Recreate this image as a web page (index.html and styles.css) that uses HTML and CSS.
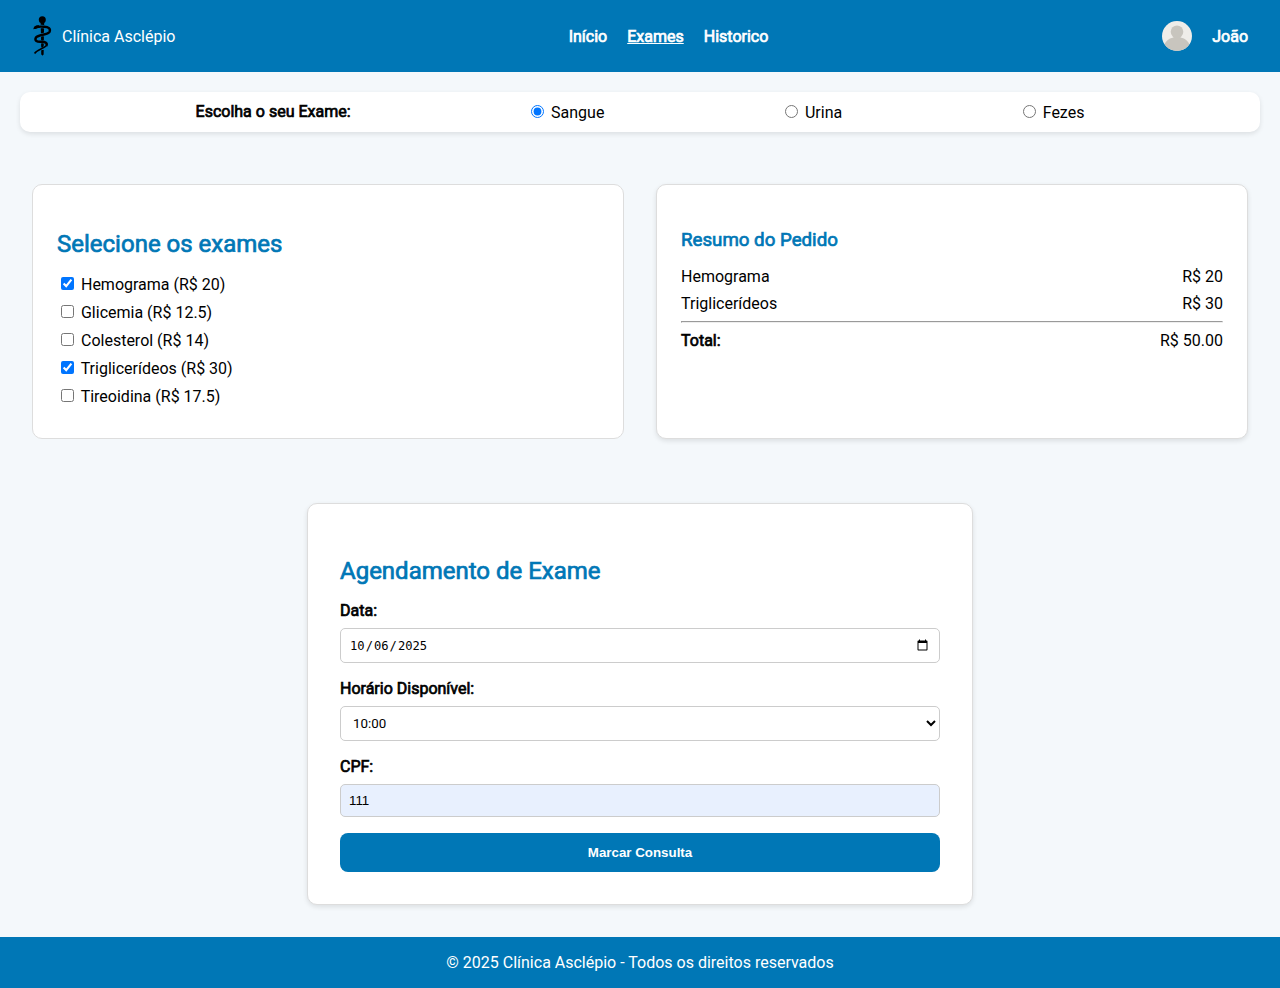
FILE: index.html
```html
<!DOCTYPE html>
<html lang="en">
<head>
<meta charset="utf-8">
<title>Clínica Asclépio</title>
<link rel="stylesheet" href="styles.css">
</head>
<body>
<header class="header">
  <div class="brand">
    <svg class="logo" width="20" height="40" viewBox="0 0 20 40" fill="none" stroke="#000">
      <circle cx="10.300" cy="3.700" r="3.500" fill="#000" stroke="none"/>
      <path d="M8.600 7h3.600l-.8 31.500-.9 1.200-.9-1.200z" fill="#000" stroke="none"/>
      <path d="M3 11.300C6 9.600 9 10.800 12 10.700C16.500 10.600 18.800 13 17.600 15.800C15.500 19 6.500 18.500 3.900 21.600C2.300 24.800 5 26 9 25.800C13.500 25.600 15.800 27.300 14.300 29.900C11.500 33 5 33.500 2.600 37.500" stroke="#0077b6" stroke-width="3.600"/>
      <path d="M10.400 12.500v4.300M10.400 20.500v4M10.400 27.500v4M10.400 34v4.500" stroke-width="2"/>
      <path d="M2.600 11.900C6 9.800 9 10.800 12 10.700C16.500 10.600 18.800 13 17.600 15.800C15.500 19 6.500 18.500 3.900 21.600C2.300 24.800 5 26 9 25.800C13.500 25.600 15.800 27.300 14.300 29.900" stroke-width="2.400"/>
      <path d="M1.300 13.200C1.500 10.800 3.500 8.800 6.800 9.200L8 11.500L4.500 12.600z" fill="#000" stroke="none"/>
      <path d="M14.600 29.500C11.500 33 5 33.500 2.600 37.500" stroke-width="1.500"/>
    </svg>
    <span>Clínica Asclépio</span>
  </div>
  <nav class="nav">
    <a class="strong">Início</a>
    <a class="strong active">Exames</a>
    <a class="strong">Historico</a>
  </nav>
  <div class="user">
    <svg width="30" height="30" viewBox="0 0 30 30">
      <clipPath id="avatar"><circle cx="15" cy="15" r="15"/></clipPath>
      <g clip-path="url(#avatar)">
        <path fill="#efede9" d="M0 0h30v30H0z"/>
        <ellipse cx="15" cy="10.800" rx="6.300" ry="6.300" fill="#c8c5be"/>
        <path fill="#c8c5be" d="M11.500 14h7v2.500c5 .8 8.500 4 9.500 9v5H2v-5c1-5 4.500-8.200 9.500-9z"/>
      </g>
    </svg>
    <span class="strong">João</span>
  </div>
</header>

<section class="picker">
  <span class="strong picker-title">Escolha o seu Exame:</span>
  <label><input type="radio" name="tipo" checked> Sangue</label>
  <label><input type="radio" name="tipo"> Urina</label>
  <label><input type="radio" name="tipo"> Fezes</label>
</section>

<main class="cards">
  <section class="card exams">
    <h2 class="title strong">Selecione os exames</h2>
    <label class="exam"><input type="checkbox" checked> Hemograma (R$ 20)</label>
    <label class="exam"><input type="checkbox"> Glicemia (R$ 12.5)</label>
    <label class="exam"><input type="checkbox"> Colesterol (R$ 14)</label>
    <label class="exam"><input type="checkbox" checked> Triglicerídeos (R$ 30)</label>
    <label class="exam"><input type="checkbox"> Tireoidina (R$ 17.5)</label>
  </section>
  <section class="card raised summary">
    <h3 class="subtitle strong">Resumo do Pedido</h3>
    <div class="line"><span>Hemograma</span><span>R$ 20</span></div>
    <div class="line"><span>Triglicerídeos</span><span>R$ 30</span></div>
    <hr class="rule">
    <div class="line"><span class="strong">Total:</span><span>R$ 50.00</span></div>
  </section>
</main>

<form class="card raised booking">
  <h2 class="title strong">Agendamento de Exame</h2>
  <label class="strong" for="data">Data:</label>
  <input class="field date" type="date" id="data" value="2025-10-06">
  <label class="strong" for="hora">Horário Disponível:</label>
  <select class="field time" id="hora"><option>10:00</option></select>
  <label class="strong" for="cpf">CPF:</label>
  <input class="field cpf" type="text" id="cpf" value="111">
  <button class="submit" type="button">Marcar Consulta</button>
</form>

<footer class="footer">© 2025 Clínica Asclépio - Todos os direitos reservados</footer>
</body>
</html>
```
FILE: styles.css
```css
* { box-sizing: border-box; }

body {
  margin: 0;
  min-height: 988px;
  display: flex;
  flex-direction: column;
  background: #f4f8fb;
  color: #000;
  font: 16px/19px Roboto, sans-serif;
}

/* Regular-width letters with a thickened outline */
.strong {
  font-weight: 400;
  -webkit-text-stroke: 0.7px currentColor;
}

.header {
  height: 72px;
  padding: 0 32px;
  display: grid;
  grid-template-columns: 1fr auto 1fr;
  align-items: center;
  background: #0077b6;
  color: #fff;
}

.brand { display: flex; align-items: center; gap: 10px; }
.logo { display: block; }
.nav { display: flex; gap: 20px; padding-left: 57px; }
.active { text-decoration: underline; }
.user { display: flex; align-items: center; justify-content: flex-end; gap: 20px; }

.picker {
  height: 40px;
  margin: 20px;
  display: flex;
  align-items: center;
  justify-content: space-evenly;
  background: #fff;
  border-radius: 10px;
  box-shadow: 0 2px 5px rgba(0, 0, 0, 0.1);
}
.picker-title { padding-bottom: 2px; }

.cards {
  padding: 32px;
  display: grid;
  grid-template-columns: 1fr 1fr;
  gap: 32px;
}

.card {
  padding: 24px;
  background: #fff;
  border: 1px solid #ddd;
  border-radius: 10px;
}

.raised { box-shadow: 0 2px 5px rgba(0, 0, 0, 0.1); }

.exams { height: 255px; }
.title { margin: 21px 0 16px; font-size: 24px; line-height: 28px; color: #0077b6; }
.subtitle { margin: 20px 0 16px; font-size: 18.720px; line-height: 22px; color: #0077b6; }
.exam { display: block; height: 19px; margin-bottom: 9px; }

.line { display: flex; justify-content: space-between; margin-bottom: 8px; }
.rule { margin: 8px 0; }

.booking {
  width: 666px;
  margin: 32px auto;
  padding: 32px;
  display: flex;
  flex-direction: column;
}

.field {
  width: 100%;
  height: 35px;
  margin: 8px 0 16px;
  padding: 8px;
  border: 1px solid #ccc;
  border-radius: 5px;
  background: #fff;
  color: #000;
  font-size: 13.333px;
}

.date { font-family: "DejaVu Sans Mono", monospace; font-size: 12.15px; }
.date::-webkit-datetime-edit { padding-top: 1px; }
.date::-webkit-calendar-picker-indicator { width: 13.333px; height: 13.333px; }
.time { font-family: Roboto, sans-serif; }
.cpf { height: 33px; background: #e8f0fe; font-family: "Liberation Sans", Arial, sans-serif; }

.submit {
  height: 39px;
  border: 0;
  border-radius: 8px;
  background: #0077b6;
  color: #fff;
  font: bold 13.333px "Liberation Sans", Arial, sans-serif;
}

.footer {
  height: 51px;
  padding: 16px;
  background: #0077b6;
  color: #fff;
  text-align: center;
}
```
